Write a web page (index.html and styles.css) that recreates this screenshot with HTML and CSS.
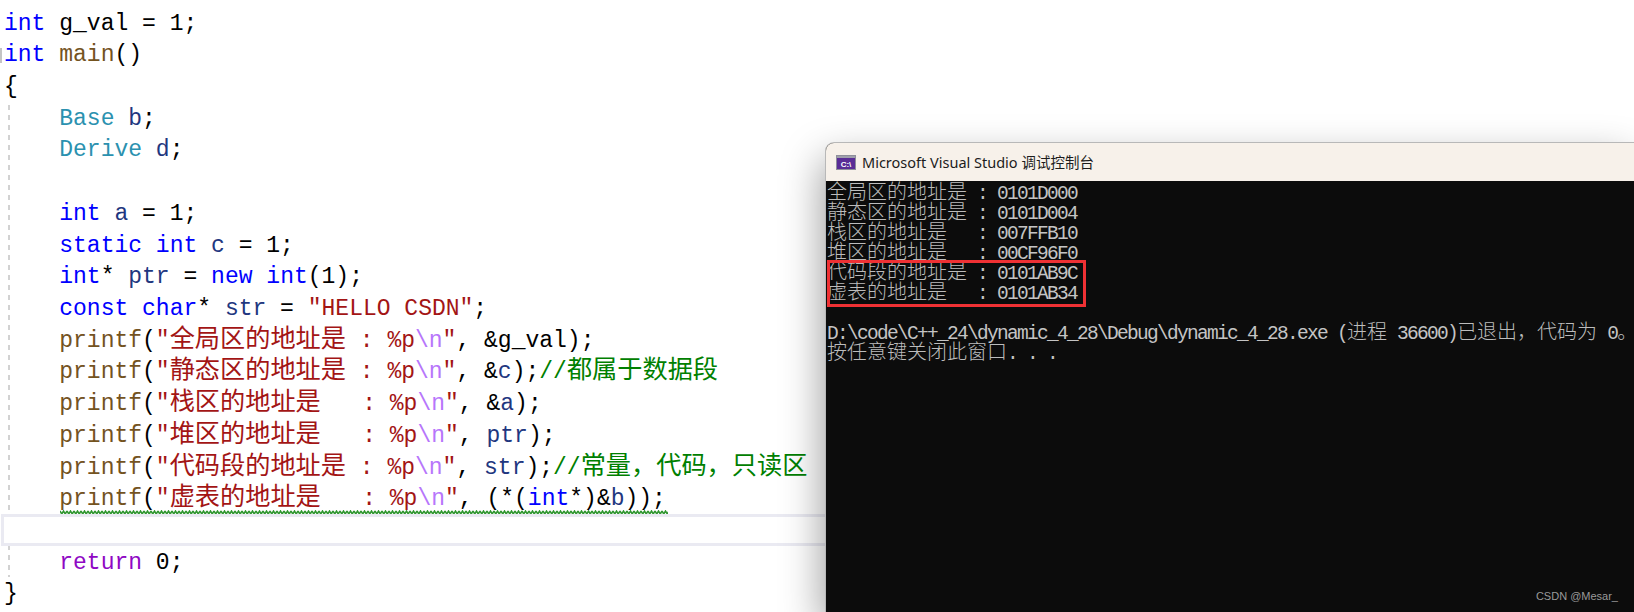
FILE: index.html
```html
<!DOCTYPE html>
<html lang="zh">
<head>
<meta charset="utf-8">
<title>Microsoft Visual Studio 调试控制台</title>
<link rel="stylesheet" href="styles.css">
</head>
<body>
<main class="editor">
  <span class="fold"></span>
  <span class="guide"></span>
  <pre class="code"><div class="ln"><b class="kw">int</b> g_val = 1;</div><div class="ln"><b class="kw">int</b> <b class="fn">main</b>()</div><div class="ln">{</div><div class="ln">    <b class="ty">Base</b> <b class="lv">b</b>;</div><div class="ln">    <b class="ty">Derive</b> <b class="lv">d</b>;</div><div class="ln"> </div><div class="ln">    <b class="kw">int</b> <b class="lv">a</b> = 1;</div><div class="ln">    <b class="kw">static</b> <b class="kw">int</b> <b class="lv">c</b> = 1;</div><div class="ln">    <b class="kw">int</b>* <b class="lv">ptr</b> = <b class="kw">new</b> <b class="kw">int</b>(1);</div><div class="ln">    <b class="kw">const</b> <b class="kw">char</b>* <b class="lv">str</b> = <b class="st">"HELLO CSDN"</b>;</div><div class="ln">    <b class="fn">printf</b>(<b class="st">"<i class="cn">全局区的地址是</i> : %p<b class="es">\n</b>"</b>, &amp;g_val);</div><div class="ln">    <b class="fn">printf</b>(<b class="st">"<i class="cn">静态区的地址是</i> : %p<b class="es">\n</b>"</b>, &amp;<b class="lv">c</b>);<b class="cm">//<i class="cn">都属于数据段</i></b></div><div class="ln">    <b class="fn">printf</b>(<b class="st">"<i class="cn">栈区的地址是</i>   : %p<b class="es">\n</b>"</b>, &amp;<b class="lv">a</b>);</div><div class="ln">    <b class="fn">printf</b>(<b class="st">"<i class="cn">堆区的地址是</i>   : %p<b class="es">\n</b>"</b>, <b class="lv">ptr</b>);</div><div class="ln">    <b class="fn">printf</b>(<b class="st">"<i class="cn">代码段的地址是</i> : %p<b class="es">\n</b>"</b>, <b class="lv">str</b>);<b class="cm">//<i class="cn">常量，代码，只读区</i></b></div><div class="ln squiggle">    <b class="fn">printf</b>(<b class="st">"<i class="cn">虚表的地址是</i>   : %p<b class="es">\n</b>"</b>, (*(<b class="kw">int</b>*)&amp;<b class="lv">b</b>));<svg class="wave" width="608" height="6" aria-hidden="true"><defs><pattern id="wave" width="7" height="6" patternUnits="userSpaceOnUse"><path d="M0 1 L1.75 4 L3.5 1 L5.25 4 L7 1" fill="none" stroke="#2f962f" stroke-width="1.5"/></pattern></defs><rect width="608" height="6" fill="url(#wave)"/></svg></div><div class="ln current"> </div><div class="ln">    <b class="rt">return</b> 0;</div><div class="ln">}</div></pre>
</main>

<section class="console">
  <header class="titlebar">
    <svg class="appicon" width="20" height="15" viewBox="0 0 20 15" aria-hidden="true"><rect x=".5" y=".5" width="19" height="14" fill="#5a2d96" stroke="#8f8f9a"/><rect x="1" y="1" width="18" height="2" fill="#a0a0ac"/><text x="10" y="12" class="icontext" text-anchor="middle">C:\</text></svg>
    <span class="wintitle">Microsoft Visual Studio 调试控制台</span>
  </header>
  <pre class="output"><div class="row"><i class="zh">全局区的地址是</i> : 0101D000</div><div class="row"><i class="zh">静态区的地址是</i> : 0101D004</div><div class="row"><i class="zh">栈区的地址是</i>   : 007FFB10</div><div class="row"><i class="zh">堆区的地址是</i>   : 00CF96F0</div><div class="marked"><div class="row"><i class="zh">代码段的地址是</i> : 0101AB9C</div><div class="row"><i class="zh">虚表的地址是</i>   : 0101AB34</div></div><div class="row"> </div><div class="row">D:\code\C++_24\dynamic_4_28\Debug\dynamic_4_28.exe (<i class="zh">进程</i> 36600)<i class="zh">已退出，代码为</i> 0<i class="zh">。</i></div><div class="row"><i class="zh">按任意键关闭此窗口</i>. . .</div></pre>
  <small class="mark">CSDN @Mesar_</small>
</section>
</body>
</html>
```

FILE: styles.css
```css
html, body {
  margin: 0;
  height: 612px;
  overflow: hidden;
  background: #fff;
}
b, i { font-weight: normal; font-style: normal; }

.editor {
  position: relative;
  height: 612px;
  padding: 8.5px 0 0 4px;
  box-sizing: border-box;
}
.code {
  margin: 0;
  font: 23px/31.72px "Liberation Mono", "Noto Sans CJK SC", monospace;
  color: #000;
}
.ln {
  position: relative;
  height: 31.72px;
  white-space: pre;
}
.current {
  top: -2px;
  margin-left: -3px;
  width: 825px;
  box-sizing: border-box;
  border: 3px solid #eaeaf2;
  border-right: 0;
  background: #fff;
}
.cn {
  font-family: "Noto Sans CJK SC", sans-serif;
  font-size: 25.2px;
  line-height: 0;
}
.kw { color: #0000ff; }
.fn { color: #74531f; }
.ty { color: #2b91af; }
.lv { color: #1f377f; }
.st { color: #a31515; }
.es { color: #b776fb; }
.cm { color: #008000; }
.rt { color: #8f08c4; }

.wave {
  position: absolute;
  left: 56px;
  top: 26px;
}
.fold {
  position: absolute;
  left: 0;
  top: 48px;
  width: 2px;
  height: 15px;
  background: #c4c4c4;
}
.guide {
  position: absolute;
  left: 8px;
  top: 105px;
  width: 2px;
  height: 472px;
  background: repeating-linear-gradient(#d2d2d2 0 5px, transparent 5px 10px);
}

.console {
  position: absolute;
  left: 826px;
  top: 143px;
  right: 0;
  bottom: 0;
  background: #0c0c0c;
  border-top-left-radius: 8px;
  box-shadow: 0 0 0 1px #b8b8b8, -4px 16px 40px rgba(0, 0, 0, .38);
}
.titlebar {
  display: flex;
  align-items: center;
  gap: 6px;
  height: 38px;
  padding-left: 10px;
  background: #f7f1ea;
  border-top-left-radius: 8px;
}
.appicon { flex: none; }
.icontext {
  font: bold 8px "Liberation Sans", sans-serif;
  fill: #fff;
}
.wintitle {
  position: relative;
  top: -1px;
  font: 14.5px "Noto Sans", "Noto Sans CJK SC", sans-serif;
  color: #1c1c1c;
}
.output {
  margin: 0;
  padding: 3px 0 0 1px;
  font: 19.5px/20px "Liberation Mono", "Noto Sans CJK SC", monospace;
  letter-spacing: -1.7px;
  color: #c4c4c4;
}
.row {
  height: 20px;
  white-space: pre;
}
.zh {
  font-family: "Noto Sans CJK SC", sans-serif;
  font-size: 20px;
  font-weight: 300;
  line-height: 0;
  letter-spacing: 0;
  color: #bcbcbc;
}
.marked {
  position: relative;
}
.marked::after {
  content: "";
  position: absolute;
  left: 0;
  top: -4px;
  width: 253px;
  height: 41px;
  border: 3px solid #ef3134;
}
.mark {
  position: absolute;
  right: 16px;
  bottom: 10px;
  font: 11px "Liberation Sans", sans-serif;
  color: #9a9a9a;
}
```
